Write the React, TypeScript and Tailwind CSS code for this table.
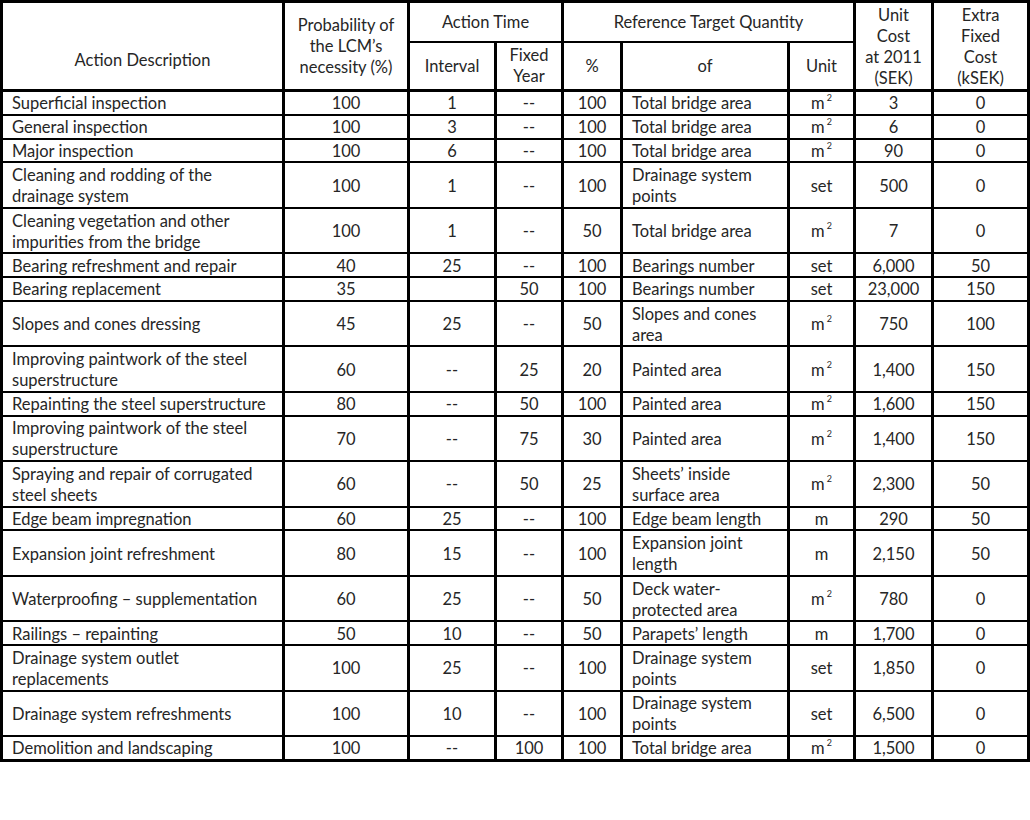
type Row = {
  desc: string[];
  prob: string;
  interval: string;
  fixed: string;
  pct: string;
  of: string[];
  unit: string;
  cost: string;
  extra: string;
  tall?: boolean;
};

const rows: Row[] = [
  { desc: ["Superficial inspection"], prob: "100", interval: "1", fixed: "--", pct: "100", of: ["Total bridge area"], unit: "m2", cost: "3", extra: "0" },
  { desc: ["General inspection"], prob: "100", interval: "3", fixed: "--", pct: "100", of: ["Total bridge area"], unit: "m2", cost: "6", extra: "0" },
  { desc: ["Major inspection"], prob: "100", interval: "6", fixed: "--", pct: "100", of: ["Total bridge area"], unit: "m2", cost: "90", extra: "0" },
  { desc: ["Cleaning and rodding of the", "drainage system"], prob: "100", interval: "1", fixed: "--", pct: "100", of: ["Drainage system", "points"], unit: "set", cost: "500", extra: "0", tall: true },
  { desc: ["Cleaning vegetation and other", "impurities from the bridge"], prob: "100", interval: "1", fixed: "--", pct: "50", of: ["Total bridge area"], unit: "m2", cost: "7", extra: "0", tall: true },
  { desc: ["Bearing refreshment and repair"], prob: "40", interval: "25", fixed: "--", pct: "100", of: ["Bearings number"], unit: "set", cost: "6,000", extra: "50" },
  { desc: ["Bearing replacement"], prob: "35", interval: "", fixed: "50", pct: "100", of: ["Bearings number"], unit: "set", cost: "23,000", extra: "150" },
  { desc: ["Slopes and cones dressing"], prob: "45", interval: "25", fixed: "--", pct: "50", of: ["Slopes and cones", "area"], unit: "m2", cost: "750", extra: "100", tall: true },
  { desc: ["Improving paintwork of the steel", "superstructure"], prob: "60", interval: "--", fixed: "25", pct: "20", of: ["Painted area"], unit: "m2", cost: "1,400", extra: "150", tall: true },
  { desc: ["Repainting the steel superstructure"], prob: "80", interval: "--", fixed: "50", pct: "100", of: ["Painted area"], unit: "m2", cost: "1,600", extra: "150" },
  { desc: ["Improving paintwork of the steel", "superstructure"], prob: "70", interval: "--", fixed: "75", pct: "30", of: ["Painted area"], unit: "m2", cost: "1,400", extra: "150", tall: true },
  { desc: ["Spraying and repair of corrugated", "steel sheets"], prob: "60", interval: "--", fixed: "50", pct: "25", of: ["Sheets\u2019 inside", "surface area"], unit: "m2", cost: "2,300", extra: "50", tall: true },
  { desc: ["Edge beam impregnation"], prob: "60", interval: "25", fixed: "--", pct: "100", of: ["Edge beam length"], unit: "m", cost: "290", extra: "50" },
  { desc: ["Expansion joint refreshment"], prob: "80", interval: "15", fixed: "--", pct: "100", of: ["Expansion joint", "length"], unit: "m", cost: "2,150", extra: "50", tall: true },
  { desc: ["Waterproofing \u2013 supplementation"], prob: "60", interval: "25", fixed: "--", pct: "50", of: ["Deck water-", "protected area"], unit: "m2", cost: "780", extra: "0", tall: true },
  { desc: ["Railings \u2013 repainting"], prob: "50", interval: "10", fixed: "--", pct: "50", of: ["Parapets\u2019 length"], unit: "m", cost: "1,700", extra: "0" },
  { desc: ["Drainage system outlet", "replacements"], prob: "100", interval: "25", fixed: "--", pct: "100", of: ["Drainage system", "points"], unit: "set", cost: "1,850", extra: "0", tall: true },
  { desc: ["Drainage system refreshments"], prob: "100", interval: "10", fixed: "--", pct: "100", of: ["Drainage system", "points"], unit: "set", cost: "6,500", extra: "0", tall: true },
  { desc: ["Demolition and landscaping"], prob: "100", interval: "--", fixed: "100", pct: "100", of: ["Total bridge area"], unit: "m2", cost: "1,500", extra: "0" },
];

function Lines({ lines }: { lines: string[] }) {
  return (
    <>
      {lines.map((l, i) => (
        <span key={i} className="block whitespace-nowrap">
          {l}
        </span>
      ))}
    </>
  );
}

function Unit({ u }: { u: string }) {
  if (u === "m2")
    return (
      <span className="whitespace-nowrap">
        m<span className="relative -top-[8px] ml-[2px] text-[9px] leading-none">2</span>
      </span>
    );
  return <>{u}</>;
}

const cols =
  "grid grid-cols-[279px_122px_84px_64px_56px_164px_63px_75px_93px] gap-x-[3px] bg-black";
const left = "bg-white flex flex-col justify-center pl-[9px] pt-[2px]";
const mid = "bg-white flex flex-col items-center justify-center";

export default function App() {
  return (
    <div className="min-h-screen bg-white text-[#262626] font-['Lato','Carlito',sans-serif] text-[16.5px] leading-[21px]">
      <div className="w-[1030px]">
        {/* header */}
        <div className={`${cols} grid-rows-[38px_46px] gap-y-[2px] p-[3px]`}>
          <div className="row-span-2 bg-white flex items-end justify-center pb-[18px]">Action Description</div>
          <div className={`row-span-2 ${mid} text-center`}>
            <Lines lines={["Probability of", "the LCM\u2019s", "necessity (%)"]} />
          </div>
          <div className={`col-span-2 ${mid}`}>Action Time</div>
          <div className={`col-span-3 ${mid}`}>Reference Target Quantity</div>
          <div className={`row-span-2 ${mid} text-center pt-[2px]`}>
            <Lines lines={["Unit", "Cost", "at 2011", "(SEK)"]} />
          </div>
          <div className={`row-span-2 ${mid} text-center pt-[2px]`}>
            <Lines lines={["Extra", "Fixed", "Cost", "(kSEK)"]} />
          </div>
          <div className={mid}>Interval</div>
          <div className={`${mid} text-center`}>
            <Lines lines={["Fixed", "Year"]} />
          </div>
          <div className={mid}>%</div>
          <div className={mid}>of</div>
          <div className={mid}>Unit</div>
        </div>

        {/* body */}
        <div className={`${cols} gap-y-[2px] px-[3px] pb-[3px]`}>
          {rows.map((r, i) => {
            const h = r.tall ? "h-[43.5px]" : "h-[21.75px]";
            const c = `${mid} ${h} pt-[2px]`;
            return (
              <div key={i} className="contents">
                <div className={`${left} ${h}`}>
                  <Lines lines={r.desc} />
                </div>
                <div className={c}>{r.prob}</div>
                <div className={c}>{r.interval}</div>
                <div className={c}>{r.fixed}</div>
                <div className={c}>{r.pct}</div>
                <div className={`${left} ${h}`}>
                  <Lines lines={r.of} />
                </div>
                <div className={c}>
                  <Unit u={r.unit} />
                </div>
                <div className={c}>{r.cost}</div>
                <div className={c}>{r.extra}</div>
              </div>
            );
          })}
        </div>
      </div>
    </div>
  );
}
